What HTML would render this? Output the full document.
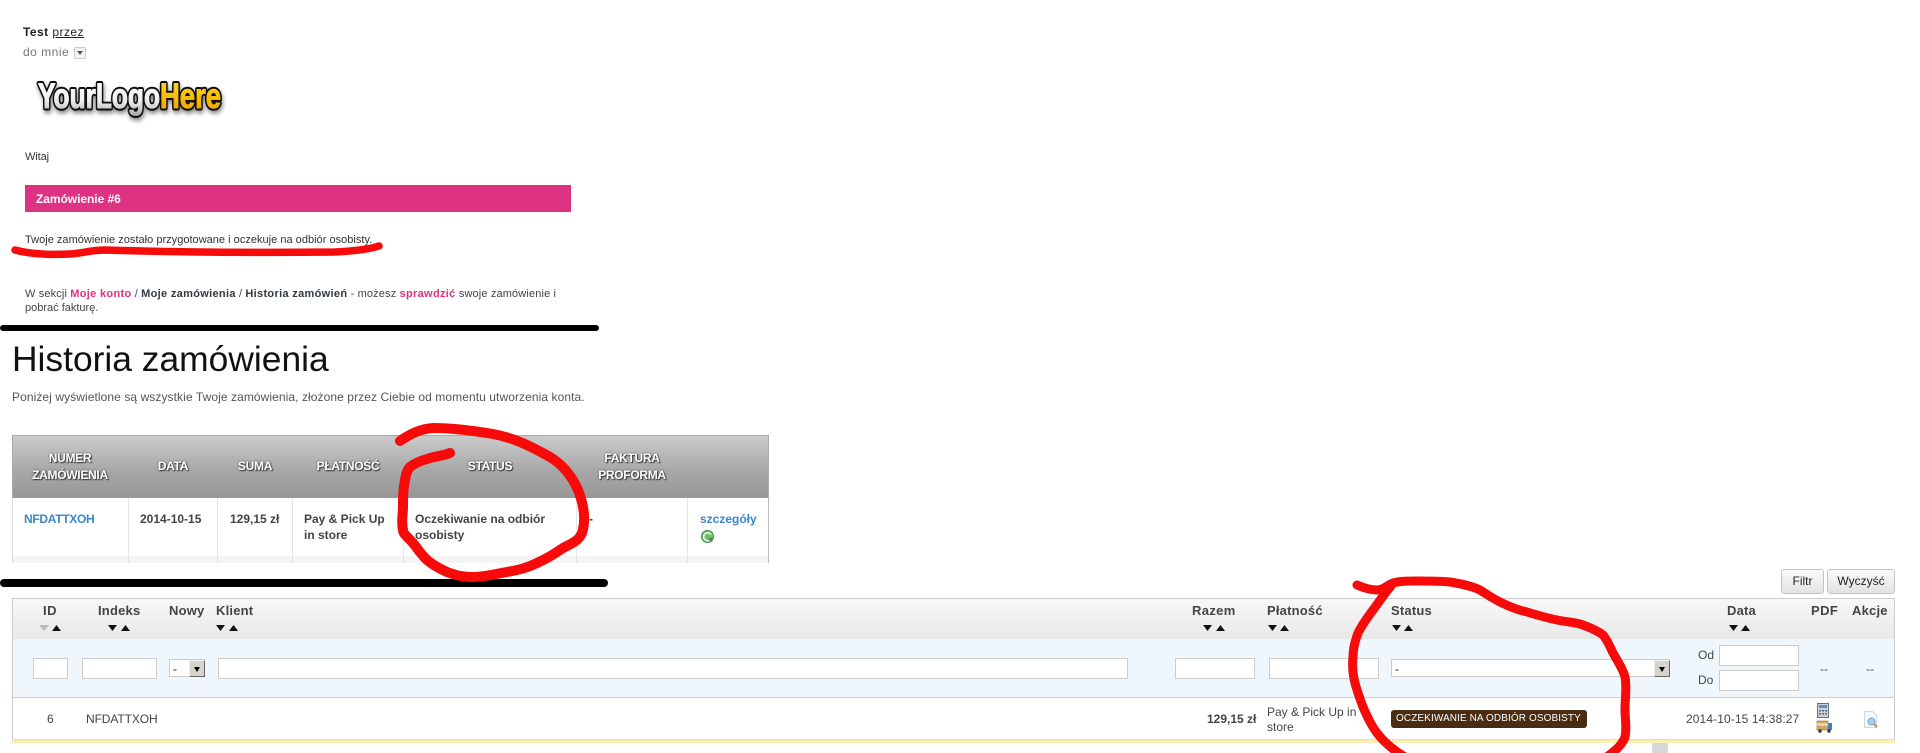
<!DOCTYPE html>
<html lang="pl">
<head>
<meta charset="utf-8">
<title>Historia zamówienia</title>
<style>
html,body{margin:0;padding:0;background:#fff;width:1920px;height:753px;overflow:hidden}
body{position:relative;font-family:"Liberation Sans",Arial,sans-serif;color:#333}
.t{position:absolute;white-space:nowrap;line-height:16px;font-size:12px}
.b{position:absolute}
.th{font-weight:bold;color:#fff;text-shadow:0 0 2px #444,1px 1px 1px #333;font-size:12px;text-align:center;letter-spacing:-.3px}
.c{font-weight:bold;color:#444;font-size:12px}
.h{font-weight:bold;color:#444;font-size:13px;letter-spacing:.2px}
.in{position:absolute;background:#fff;border:1px solid #ccc;box-sizing:border-box}
.btn{position:absolute;box-sizing:border-box;border:1px solid #c4c4c4;border-radius:3px;background:linear-gradient(#fafafa,#e2e2e2);text-align:center;font-size:12px;line-height:22px;color:#222}
.sbtn{position:absolute;box-sizing:border-box;background:#d6d3cc;border:1px solid;border-color:#eee #666 #666 #eee}
.sbtn:after{content:"";position:absolute;left:4px;top:6px;border:3.5px solid transparent;border-top:5px solid #000;border-bottom:0}
.w b{letter-spacing:.32px}
</style>
</head>
<body>
<!-- email -->
<div class="t" style="left:23px;top:24px;color:#222;letter-spacing:.45px"><b>Test</b> <u>przez</u></div>
<div class="t" style="left:23px;top:44px;color:#777;letter-spacing:.5px">do mnie</div>
<div class="b" style="left:74px;top:47px;width:12px;height:12px;box-sizing:border-box;border:1px solid #ccc;border-radius:2px;background:#f4f4f4"></div>
<div class="b" style="left:77px;top:51px;border:3px solid transparent;border-top:4px solid #555;border-bottom:0"></div>

<svg class="b" style="left:20px;top:70px" width="230" height="60" viewBox="0 0 230 60">
<defs>
<linearGradient id="g1" gradientUnits="userSpaceOnUse" x1="0" y1="12" x2="0" y2="46"><stop offset="0" stop-color="#fff"/><stop offset=".55" stop-color="#eee"/><stop offset="1" stop-color="#a8a8a8"/></linearGradient>
<linearGradient id="g2" gradientUnits="userSpaceOnUse" x1="0" y1="12" x2="0" y2="40"><stop offset="0" stop-color="#ffd21a"/><stop offset="1" stop-color="#f2a900"/></linearGradient>
<filter id="sh" x="-10%" y="-30%" width="120%" height="170%"><feDropShadow dx="1" dy="3" stdDeviation="2" flood-color="#000" flood-opacity=".45"/></filter>
</defs>
<g font-family="Liberation Sans, sans-serif" font-weight="bold" font-size="35">
<g filter="url(#sh)" stroke="#111" stroke-width="5" stroke-linejoin="round" fill="#111">
<text x="18" y="38" textLength="122" lengthAdjust="spacingAndGlyphs">YourLogo</text>
<text x="140" y="38" textLength="61" lengthAdjust="spacingAndGlyphs">Here</text>
</g>
<text x="18" y="38" fill="url(#g1)" stroke="url(#g1)" stroke-width="1.100" textLength="122" lengthAdjust="spacingAndGlyphs">YourLogo</text>
<text x="140" y="38" fill="url(#g2)" stroke="url(#g2)" stroke-width="1.100" textLength="61" lengthAdjust="spacingAndGlyphs">Here</text>
</g>
</svg>

<div class="t" style="left:25px;top:149px;font-size:11px;color:#333;letter-spacing:-.1px">Witaj</div>
<div class="b" style="left:25px;top:185px;width:546px;height:27px;background:#dd3382"></div>
<div class="t" style="left:36px;top:191px;color:#fff;font-weight:bold;font-size:12px;letter-spacing:-.05px">Zamówienie #6</div>
<div class="t" style="left:25px;top:232px;font-size:11px;color:#333;letter-spacing:.02px">Twoje zamówienie zostało przygotowane i oczekuje na odbiór osobisty.</div>
<div class="t w" style="left:25px;top:286px;font-size:11px;color:#444;letter-spacing:.14px">W sekcji <b style="color:#e0317f">Moje konto</b> / <b style="color:#2f3a44">Moje zamówienia</b> / <b style="color:#2f3a44">Historia zamówień</b> - możesz <b style="color:#e0317f">sprawdzić</b> swoje zamówienie i</div>
<div class="t" style="left:25px;top:300px;font-size:11px;color:#444">pobrać fakturę.</div>

<!-- order history -->
<div class="t" style="left:12px;top:337px;font-size:35.400px;line-height:44px;color:#111">Historia zamówienia</div>
<div class="t" style="left:12px;top:389px;font-size:12px;color:#555;letter-spacing:.08px">Poniżej wyświetlone są wszystkie Twoje zamówienia, złożone przez Ciebie od momentu utworzenia konta.</div>

<div class="b" style="left:12px;top:435px;width:757px;height:63px;box-sizing:border-box;border:1px solid #aaa;border-bottom:0;background:linear-gradient(#cbcbcb,#a8a8a8 55%,#979797)"></div>
<div class="b" style="left:12px;top:498px;width:757px;height:58px;box-sizing:border-box;border-left:1px solid #ddd;border-right:1px solid #bbb;background:#fff"></div>
<div class="b" style="left:12px;top:556px;width:757px;height:7px;box-sizing:border-box;border-left:1px solid #ddd;border-right:1px solid #bbb;background:#f4f4f4"></div>
<div class="b" style="left:128px;top:498px;width:1px;height:65px;background:#e6e6e6"></div>
<div class="b" style="left:217px;top:498px;width:1px;height:65px;background:#e6e6e6"></div>
<div class="b" style="left:292px;top:498px;width:1px;height:65px;background:#e6e6e6"></div>
<div class="b" style="left:403px;top:498px;width:1px;height:65px;background:#e6e6e6"></div>
<div class="b" style="left:576px;top:498px;width:1px;height:65px;background:#e6e6e6"></div>
<div class="b" style="left:687px;top:498px;width:1px;height:65px;background:#e6e6e6"></div>

<div class="t th" style="left:12px;width:116px;top:450px">NUMER</div>
<div class="t th" style="left:12px;width:116px;top:467px">ZAMÓWIENIA</div>
<div class="t th" style="left:129px;width:88px;top:458px">DATA</div>
<div class="t th" style="left:218px;width:74px;top:458px">SUMA</div>
<div class="t th" style="left:293px;width:110px;top:458px">PŁATNOŚĆ</div>
<div class="t th" style="left:404px;width:172px;top:458px">STATUS</div>
<div class="t th" style="left:577px;width:110px;top:450px">FAKTURA</div>
<div class="t th" style="left:577px;width:110px;top:467px">PROFORMA</div>

<div class="t c" style="left:24px;top:511px;color:#3a87c8;letter-spacing:-.3px">NFDATTXOH</div>
<div class="t c" style="left:140px;top:511px">2014-10-15</div>
<div class="t c" style="left:230px;top:511px">129,15 zł</div>
<div class="t c" style="left:304px;top:511px">Pay &amp; Pick Up</div>
<div class="t c" style="left:304px;top:527px">in store</div>
<div class="t c" style="left:415px;top:511px">Oczekiwanie na odbiór</div>
<div class="t c" style="left:415px;top:527px">osobisty</div>
<div class="t c" style="left:589px;top:511px">-</div>
<div class="t c" style="left:700px;top:511px;color:#3a87c8">szczegóły</div>
<svg class="b" style="left:700px;top:529px" width="16" height="16" viewBox="0 0 16 16"><circle cx="7.500" cy="7.500" r="6" fill="#6fbf6a" stroke="#3f8f45"/><path d="M11 5.500A4 4 0 1 0 11 10" fill="none" stroke="#e8f6e6" stroke-width="1.600"/><path d="M8 9l5 .2-2.200 4.600z" fill="#3f8f45"/></svg>

<!-- admin grid -->
<div class="btn" style="left:1781px;top:569px;width:43px;height:25px">Filtr</div>
<div class="btn" style="left:1827px;top:569px;width:68px;height:25px">Wyczyść</div>

<div class="b" style="left:12px;top:598px;width:1883px;height:41px;box-sizing:border-box;border:1px solid #ccc;border-bottom:0;background:linear-gradient(#f8f8f8,#e8e8e8)"></div>
<div class="b" style="left:12px;top:639px;width:1883px;height:59px;box-sizing:border-box;border-left:1px solid #ccc;border-right:1px solid #ccc;border-bottom:1px solid #ccc;background:#eff6fc"></div>
<div class="b" style="left:12px;top:698px;width:1883px;height:41px;box-sizing:border-box;border-left:1px solid #ccc;border-right:1px solid #ccc;background:#fff"></div>
<div class="b" style="left:12px;top:739px;width:1883px;height:4px;background:#fdeeb4;border-top:1px solid #e6dcae;box-sizing:border-box"></div>
<div class="b" style="left:1652px;top:743px;width:16px;height:10px;background:#d8d8d8"></div>

<div class="t h" style="left:43px;top:603px;letter-spacing:.5px">ID</div>
<div class="t h" style="left:98px;top:603px">Indeks</div>
<div class="t h" style="left:169px;top:603px">Nowy</div>
<div class="t h" style="left:216px;top:603px">Klient</div>
<div class="t h" style="left:1192px;top:603px;letter-spacing:.35px">Razem</div>
<div class="t h" style="left:1267px;top:603px">Płatność</div>
<div class="t h" style="left:1391px;top:603px">Status</div>
<div class="t h" style="left:1727px;top:603px">Data</div>
<div class="t h" style="left:1811px;top:603px;letter-spacing:.4px">PDF</div>
<div class="t h" style="left:1852px;top:603px">Akcje</div>

<svg class="b" style="left:0;top:620px" width="1920" height="16" viewBox="0 620 1920 16">
<g fill="#111">
<path d="M39 625h10l-5 6z" fill="#bbb"/><path d="M52 631h9l-4.500-6z"/>
<path d="M108 625h9l-4.500 6z"/><path d="M121 631h9l-4.500-6z"/>
<path d="M216 625h9l-4.500 6z"/><path d="M229 631h9l-4.500-6z"/>
<path d="M1203 625h9l-4.500 6z"/><path d="M1216 631h9l-4.500-6z"/>
<path d="M1268 625h9l-4.500 6z"/><path d="M1280 631h9l-4.500-6z"/>
<path d="M1392 625h9l-4.500 6z"/><path d="M1404 631h9l-4.500-6z"/>
<path d="M1729 625h9l-4.500 6z"/><path d="M1741 631h9l-4.500-6z"/>
</g>
</svg>

<div class="in" style="left:33px;top:658px;width:35px;height:21px"></div>
<div class="in" style="left:82px;top:658px;width:75px;height:21px"></div>
<div class="in" style="left:169px;top:659px;width:36px;height:18px"></div>
<div class="t" style="left:173px;top:661px;font-size:12px;color:#222">-</div>
<div class="sbtn" style="left:189px;top:660px;width:16px;height:17px"></div>
<div class="in" style="left:218px;top:658px;width:910px;height:21px"></div>
<div class="in" style="left:1175px;top:658px;width:80px;height:21px"></div>
<div class="in" style="left:1269px;top:658px;width:110px;height:21px"></div>
<div class="in" style="left:1391px;top:659px;width:279px;height:18px"></div>
<div class="t" style="left:1395px;top:661px;font-size:12px;color:#222">-</div>
<div class="sbtn" style="left:1654px;top:660px;width:16px;height:17px"></div>
<div class="t" style="left:1698px;top:647px;font-size:12px;color:#444">Od</div>
<div class="t" style="left:1698px;top:672px;font-size:12px;color:#444">Do</div>
<div class="in" style="left:1719px;top:645px;width:80px;height:21px"></div>
<div class="in" style="left:1719px;top:670px;width:80px;height:21px"></div>
<div class="t" style="left:1820px;top:661px;font-size:12px;color:#444">--</div>
<div class="t" style="left:1866px;top:661px;font-size:12px;color:#444">--</div>

<div class="t" style="left:47px;top:711px;font-size:12px;color:#444">6</div>
<div class="t" style="left:86px;top:711px;font-size:12px;color:#444;letter-spacing:-.1px">NFDATTXOH</div>
<div class="t" style="left:1207px;top:711px;font-size:12px;font-weight:bold;color:#444">129,15 zł</div>
<div class="t" style="left:1267px;top:704px;font-size:12px;color:#444">Pay &amp; Pick Up in</div>
<div class="t" style="left:1267px;top:719px;font-size:12px;color:#444">store</div>
<div class="b" style="left:1391px;top:710px;width:196px;height:18px;border-radius:3px;background:#4a2c12"></div>
<div class="t" style="left:1396px;top:711px;font-size:10px;color:#fff;letter-spacing:.1px">OCZEKIWANIE NA ODBIÓR OSOBISTY</div>
<div class="t" style="left:1686px;top:711px;font-size:12px;color:#444;letter-spacing:.1px">2014-10-15 14:38:27</div>

<svg class="b" style="left:1816px;top:703px" width="18" height="31" viewBox="0 0 18 31">
<rect x="1.500" y=".500" width="11" height="14" fill="#c9d3de" stroke="#66727f"/>
<rect x="3" y="2" width="8" height="3" fill="#5a8fc0"/>
<path d="M3 7h2v1.500H3zM6 7h2v1.500H6zM9 7h2v1.500H9zM3 10h2v1.500H3zM6 10h2v1.500H6zM9 10h2v1.500H9z" fill="#666"/>
<rect x="1" y="18" width="11" height="9" fill="#d6a45e" stroke="#9a7236" stroke-width=".6"/>
<rect x="1" y="20.500" width="11" height="2" fill="#f3e3c2"/>
<path d="M12 20h4v7h-4z" fill="#3f7fc4"/>
<circle cx="4" cy="28" r="1.700" fill="#333"/><circle cx="13" cy="28" r="1.700" fill="#333"/>
</svg>
<svg class="b" style="left:1862px;top:711px" width="18" height="18" viewBox="0 0 18 18">
<path d="M2.500.500h8l4 4v12h-12z" fill="#f6f8fb" stroke="#cfd6de"/>
<circle cx="9.500" cy="10.500" r="3.500" fill="#a9cdea" stroke="#7fa6c6"/>
<path d="M12 13l3 3" stroke="#c98f4a" stroke-width="2"/>
</svg>

<!-- markup strokes -->
<svg class="b" style="left:0;top:0;pointer-events:none" width="1920" height="753" viewBox="0 0 1920 753">
<rect x="0" y="325" width="599" height="6" rx="3" fill="#000"/>
<rect x="0" y="579" width="608" height="8" rx="4" fill="#000"/>
<g fill="none" stroke="#f60a0a" stroke-linecap="round" stroke-linejoin="round">
<path stroke-width="7.500" d="M15 250C30 254 50 255 70 254C85 253 90 250 105 250C170 252 250 253 335 252C355 251 370 249 379 246"/>
<path stroke-width="10" d="M400 441C410 434 420 429 433 428C455 428 475 431 493 434C515 438 532 447 550 457C562 464 572 476 578 490C584 505 586 520 582 533C578 542 570 544 563 548C553 555 546 559 537 563C527 568 518 570 507 572C495 574 485 577 473 577C462 577 455 575 447 572C438 568 433 565 427 560C420 553 418 549 413 543C407 536 403 534 403 530C401 520 403 515 403 507C403 497 403 490 405 480C406 474 407 470 410 467C415 463 420 461 427 459C435 456 443 456 450 453"/>
<path stroke-width="9" d="M1357 585C1364 588 1370 590 1377 590C1384 590 1387 585 1393 583C1400 581 1408 581 1417 581C1428 581 1440 581 1450 582C1462 584 1472 586 1480 590C1488 595 1492 598 1500 602C1508 606 1518 610 1527 612C1537 615 1547 618 1557 620C1566 622 1575 622 1583 625C1591 628 1598 631 1603 635C1608 641 1610 647 1613 653C1618 662 1623 669 1625 677C1627 688 1625 699 1625 710C1625 719 1627 728 1625 737C1622 745 1616 750 1608 756"/>
<path stroke-width="9" d="M1391 586C1384 594 1379 602 1373 610C1367 618 1362 625 1358 633C1355 641 1353 649 1353 657C1352 666 1353 675 1355 683C1357 691 1360 699 1363 707C1367 716 1371 725 1377 733C1384 742 1393 750 1405 757"/>
</g>
</svg>
</body>
</html>
